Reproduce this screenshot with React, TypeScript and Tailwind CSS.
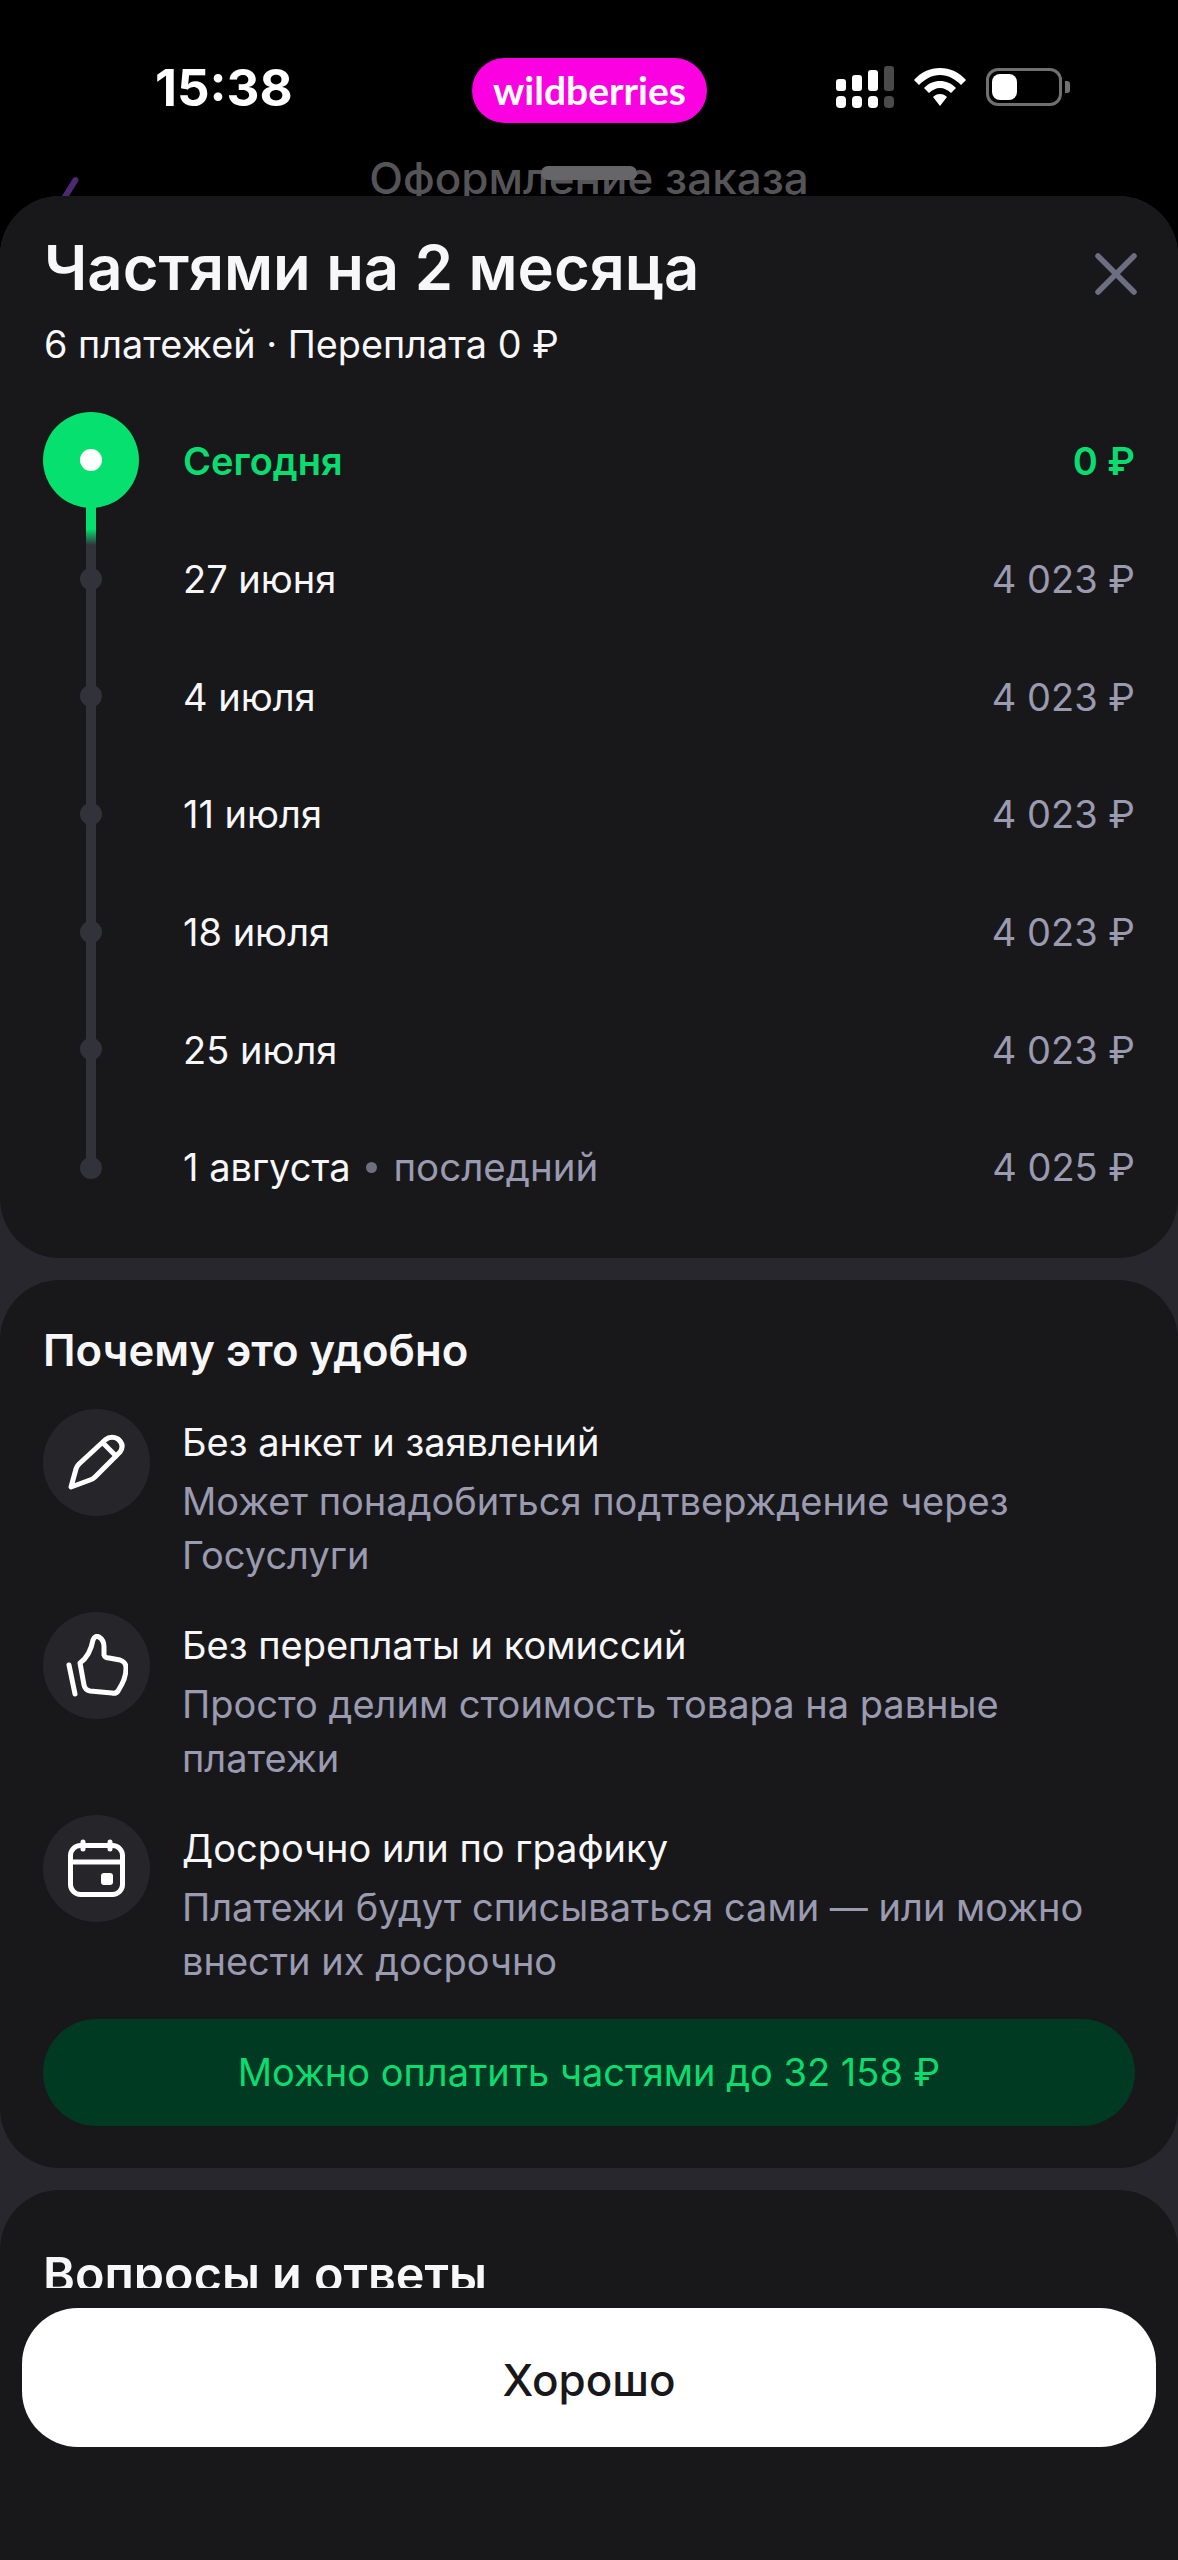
const payments = [
  { date: "27 июня", sum: "4 023 ₽" },
  { date: "4 июля", sum: "4 023 ₽" },
  { date: "11 июля", sum: "4 023 ₽" },
  { date: "18 июля", sum: "4 023 ₽" },
  { date: "25 июля", sum: "4 023 ₽" },
];

const PencilIcon = () => (
  <svg width="57" height="56" viewBox="0 0 57 56" fill="none" stroke="white" strokeWidth="5" strokeLinejoin="round" strokeLinecap="round">
    <path d="M3 53 L8 35 Q9 32 11 30 L37 6 Q43 1 50 5 Q57 11 52 18 L27 43 Q25 45 22 46 Z" />
    <path d="M35 9 L48 22" />
  </svg>
);

const ThumbIcon = () => (
  <svg width="62" height="63" viewBox="0 0 62 63" fill="none" stroke="white" strokeWidth="5" strokeLinejoin="round" strokeLinecap="round">
    <path d="M14 29 Q24 22 27 6 Q29 1 33 3 Q38 6 38 13 L38 21 Q39 24 43 24 L54 26 Q60 28 60 34 Q60 42 56 50 L52 57 Q50 60 46 59 L24 57 Q19 56 18 51 Z" />
    <path d="M3 31 L9 60" />
  </svg>
);

const CalendarIcon = () => (
  <svg width="57" height="58" viewBox="0 0 57 58" fill="none" stroke="white" strokeWidth="5" strokeLinecap="round">
    <rect x="2.5" y="6.5" width="52" height="49" rx="10" />
    <path d="M2.5 23 H54.5 M15 3 V10 M42 3 V10" />
    <rect x="33" y="34" width="12" height="12" rx="3" fill="white" stroke="none" />
  </svg>
);

const StatusIcons = () => (
  <div className="flex items-center">
    <svg width="60" height="42" viewBox="0 0 60 42" fill="white">
      <rect x="0" y="13" width="10" height="12" rx="3" />
      <rect x="16" y="9" width="10" height="16" rx="3" />
      <rect x="32" y="4" width="10" height="21" rx="3" />
      <rect x="48" y="0" width="10" height="25" rx="3" fill="#4a4a4a" />
      <rect x="0" y="30" width="10" height="12" rx="4" />
      <rect x="16" y="30" width="10" height="12" rx="4" />
      <rect x="32" y="30" width="10" height="12" rx="4" />
      <rect x="48" y="30" width="10" height="12" rx="4" fill="#4a4a4a" />
    </svg>
    <svg className="ml-[18px]" width="52" height="38" viewBox="0 0 52 38" fill="white">
      <path d="M26 0 C36 0 45 4 52 12 L47 17 C41 11 34 7 26 7 C18 7 11 11 5 17 L0 12 C7 4 16 0 26 0 Z" />
      <path d="M26 13 C32 13 37 15 42 20 L37 25 C34 22 30 20 26 20 C22 20 18 22 15 25 L10 20 C15 15 20 13 26 13 Z" />
      <path d="M26 26 C29 26 31 27 33 29 L26 38 L19 29 C21 27 23 26 26 26 Z" />
    </svg>
    <div className="ml-[20px] flex items-center">
      <div className="h-[38px] w-[76px] rounded-[12px] border-[3px] border-[#707070] p-[3px]">
        <div className="h-full w-[25px] rounded-[8px] bg-white" />
      </div>
      <div className="ml-[3px] h-[12px] w-[5px] rounded-r-[3px] bg-[#707070]" />
    </div>
  </div>
);

export default function App() {
  return (
    <div className="relative h-[2560px] w-[1178px] overflow-hidden bg-black font-['Inter',sans-serif]">
      {/* status bar */}
      <div className="mt-[58px] flex h-[65px] items-center pl-[155px]">
        <div className="-mt-[6px] w-[317px] text-[51px] font-bold leading-none text-white">15:38</div>
        <div className="flex h-[65px] w-[235px] items-center justify-center rounded-full bg-[#fb00e0] font-['Lato',sans-serif] text-[39px] font-bold text-white">
          wildberries
        </div>
        <div className="-mt-[7px] ml-[129px]">
          <StatusIcons />
        </div>
      </div>

      {/* header behind the sheet */}
      <div className="relative h-[73px] overflow-hidden">
        <div className="mt-[25px] text-center text-[44px] font-medium leading-[60px] text-[#555558]">Оформление заказа</div>
        <div className="absolute left-[541px] top-[43px] h-[14px] w-[96px] rounded-full bg-[#666669]" />
        <div className="absolute left-[65px] top-[52px] h-[34px] w-[6px] rotate-[32deg] rounded-full bg-[#4b2a73]" />
      </div>

      {/* sheet */}
      <div className="flex flex-col gap-[22px] rounded-t-[60px] bg-[#27272d]">
        <section className="rounded-[60px] bg-[#18181b] pt-[36px] pb-[31px]">
          <div className="flex items-center justify-between pl-[44px] pr-[41px]">
            <h1 className="text-[61.5px] font-semibold leading-[72px] text-[#f7f7f9]">Частями на 2 месяца</h1>
            <svg className="mt-[12px]" width="42" height="42" viewBox="0 0 42 42" stroke="#6e6e82" strokeWidth="5.5" strokeLinecap="round">
              <path d="M3 3 L39 39 M39 3 L3 39" />
            </svg>
          </div>
          <p className="mt-[16px] pl-[44px] text-[37.8px] leading-[48px] text-[#f7f7f9]">6 платежей · Переплата 0 ₽</p>

          <div className="relative mt-[35px]">
            <div className="absolute left-[86px] top-[58px] h-[707px] w-[10px] rounded-full bg-[linear-gradient(to_bottom,#05e06f_68px,#32323a_84px)]" />
            <div className="flex h-[117.7px] items-center">
              <div className="relative ml-[43px] flex size-[96px] -translate-y-[2px] items-center justify-center rounded-full bg-[#05e06f]">
                <div className="size-[22px] rounded-full bg-white" />
              </div>
              <div className="ml-[44px] flex-1 text-[38px] font-semibold text-[#0bdc70]">Сегодня</div>
              <div className="pr-[43px] text-[38px] font-semibold text-[#0bdc70]">0 ₽</div>
            </div>
            {payments.map((p) => (
              <div key={p.date} className="flex h-[117.7px] items-center">
                <div className="relative ml-[80px] size-[22px] -translate-y-px rounded-full bg-[#32323a]" />
                <div className="ml-[81px] flex-1 text-[38px] text-[#f7f7f9]">{p.date}</div>
                <div className="pr-[43px] text-[38px] text-[#9a9ab0]">{p.sum}</div>
              </div>
            ))}
            <div className="flex h-[117.7px] items-center">
              <div className="relative ml-[80px] size-[22px] rounded-full bg-[#32323a]" />
              <div className="ml-[81px] flex flex-1 items-center text-[38px] text-[#f7f7f9]">
                1 августа
                <span className="mx-[16px] size-[11px] rounded-full bg-[#6e6e7e]" />
                <span className="text-[38.5px] text-[#9a9ab0]">последний</span>
              </div>
              <div className="pr-[43px] text-[38px] text-[#9a9ab0]">4 025 ₽</div>
            </div>
          </div>
        </section>

        <section className="rounded-[60px] bg-[#18181b] px-[43px] pt-[43px] pb-[42px]">
          <h2 className="text-[43.7px] font-semibold leading-[56px] text-[#f7f7f9]">Почему это удобно</h2>
          <div className="mt-[30px] flex flex-col gap-[30px]">
            <Reason icon={<PencilIcon />} title="Без анкет и заявлений" text="Может понадобиться подтверждение через Госуслуги" />
            <Reason icon={<ThumbIcon />} title="Без переплаты и комиссий" text="Просто делим стоимость товара на равные платежи" />
            <Reason icon={<CalendarIcon />} title="Досрочно или по графику" text="Платежи будут списываться сами — или можно внести их досрочно" />
            <div className="mt-[1px] flex h-[107px] items-center justify-center rounded-[54px] bg-[#003a22] text-[38px] text-[#0bdc70]">
              Можно оплатить частями до 32 158 ₽
            </div>
          </div>
        </section>

        <section className="h-[400px] rounded-t-[60px] bg-[#18181b] px-[43px] pt-[57px]">
          <h2 className="text-[48.5px] font-semibold leading-[56px] text-[#f7f7f9]">Вопросы и ответы</h2>
        </section>
      </div>

      {/* sticky footer */}
      <div className="absolute inset-x-0 bottom-0 h-[272px] bg-[#18181b] px-[22px] pt-[20px]">
        <button className="flex h-[139px] w-full items-center justify-center rounded-[56px] bg-white pt-[4px] text-[44px] font-medium text-[#18181b]">
          Хорошо
        </button>
      </div>
    </div>
  );
}

function Reason({ icon, title, text }: { icon: React.ReactNode; title: string; text: string }) {
  return (
    <div className="flex gap-[32px]">
      <div className="flex size-[107px] shrink-0 items-center justify-center rounded-full bg-[#25252a]">{icon}</div>
      <div className="flex-1 pt-[6px]">
        <div className="text-[38px] leading-[54px] text-[#f7f7f9]">{title}</div>
        <div className="mt-[5px] text-[38px] leading-[54px] text-[#9a9ab0]">{text}</div>
      </div>
    </div>
  );
}
